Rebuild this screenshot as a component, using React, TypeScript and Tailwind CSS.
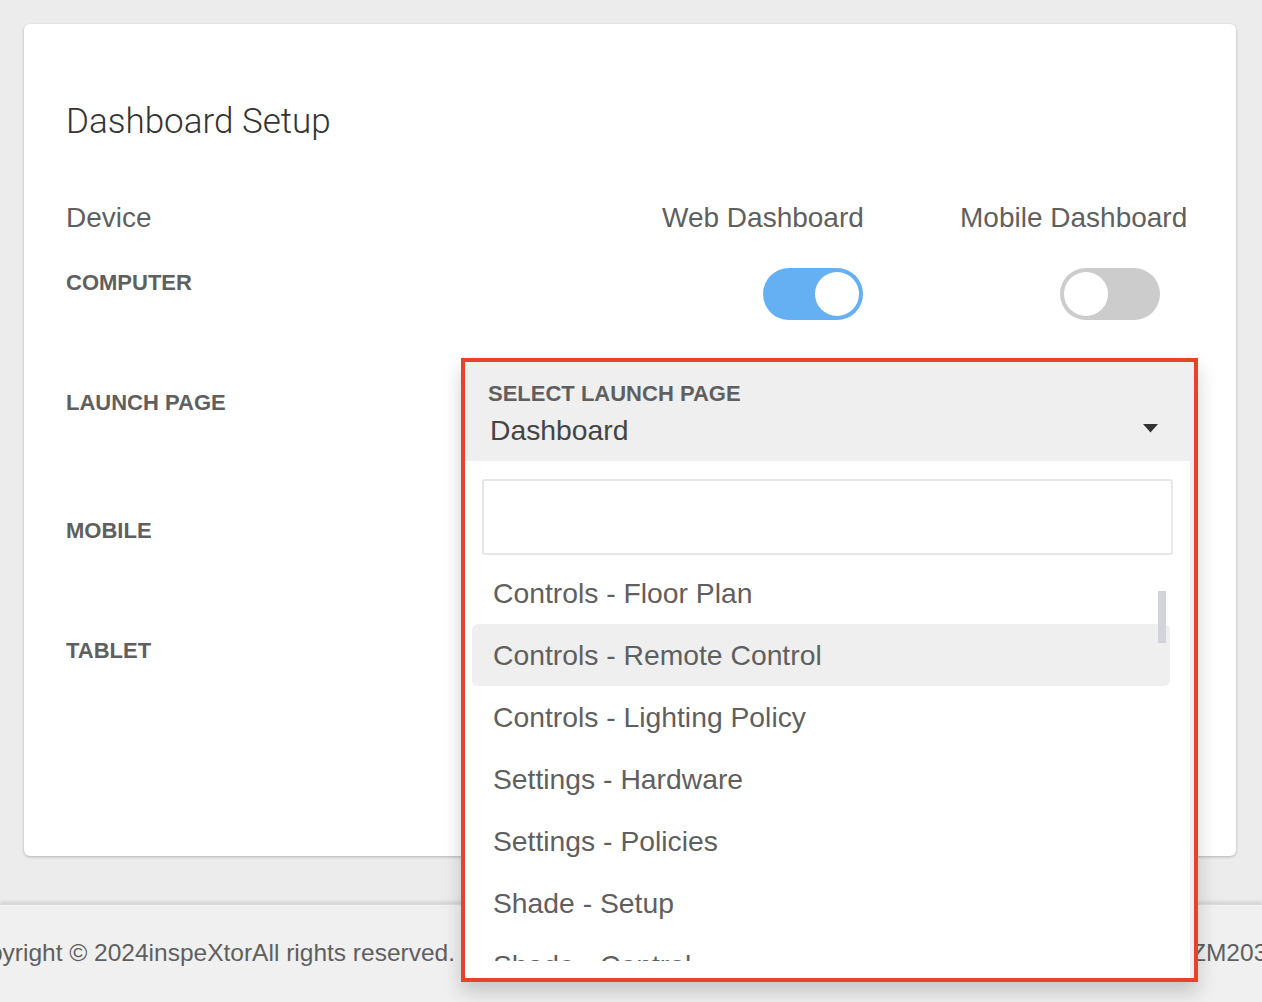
import { useState } from "react";

const options = [
  "Controls - Floor Plan",
  "Controls - Remote Control",
  "Controls - Lighting Policy",
  "Settings - Hardware",
  "Settings - Policies",
  "Shade - Setup",
  "Shade - Control",
  "Shade - Schedule",
];

const Toggle = ({ on }: { on: boolean }) => (
  <div
    className={
      "w-[100px] h-[52px] rounded-full p-[4px] flex " +
      (on ? "bg-[#64b0f2] justify-end" : "bg-[#cccccc] justify-start")
    }
  >
    <div className="w-[44px] h-[44px] rounded-full bg-white" />
  </div>
);

const App = () => {
  const [search, setSearch] = useState("");
  return (
    <div
      className="relative min-h-[1002px] h-[1002px] overflow-hidden bg-[#ececec] flex flex-col text-[#5f5f5f]"
      style={{ fontFamily: '"Liberation Sans", Arial, sans-serif' }}
    >
      <div className="pl-6 pr-[26px] pt-6 shrink-0">
        {/* settings card */}
        <div className="h-[832px] bg-white rounded-md shadow-[0_1px_3px_rgba(0,0,0,0.25)] pl-[42px] pr-[44px] pt-[76px]">
          <h1
            className="h-[44px] leading-[44px] text-[35px] font-light text-[#333]"
            style={{ fontFamily: '"Helvetica Neue", Roboto, "Liberation Sans", sans-serif' }}
          >
            Dashboard Setup
          </h1>

          <div className="mt-[54px] flex h-[40px] items-center text-[28px]">
            <div className="flex-1">Device</div>
            <div className="w-[204px] whitespace-nowrap">Web Dashboard</div>
            <div className="w-[232px] ml-[94px] whitespace-nowrap">Mobile Dashboard</div>
          </div>

          <div className="mt-[30px] flex items-start">
            <div className="flex-1 h-[30px] leading-[30px] text-[22px] font-bold">COMPUTER</div>
            <div className="w-[204px] pl-[101px]">
              <Toggle on />
            </div>
            <div className="w-[232px] ml-[94px] pl-[100px]">
              <Toggle on={false} />
            </div>
          </div>

          <div className="mt-[68px] h-[30px] leading-[30px] text-[22px] font-bold">LAUNCH PAGE</div>
          <div className="mt-[98px] h-[30px] leading-[30px] text-[22px] font-bold">MOBILE</div>
          <div className="mt-[90px] h-[30px] leading-[30px] text-[22px] font-bold">TABLET</div>
        </div>
      </div>

      {/* footer */}
      <div className="mt-auto h-[98px] bg-[#f0f0f0] shadow-[0_-2px_4px_rgba(0,0,0,0.12)] border-t border-[#dcdcdc] flex items-center text-[24.5px] whitespace-nowrap">
        <div className="w-[455px] shrink-0 flex justify-end">
          <span>Copyright © 2024inspeXtorAll rights reserved.</span>
        </div>
        <div className="shrink-0 ml-[736px]">ZM2034 v2.1.0</div>
      </div>

      {/* open launch page dropdown */}
      <div className="absolute left-[461px] top-[358px] w-[737px] h-[624px] border-[4px] border-[#e8432a] bg-[#efefef] shadow-[0_10px_18px_rgba(0,0,0,0.18)] flex flex-col overflow-hidden">
        <div className="h-[99px] shrink-0 bg-[#efefef] pl-[23px] pr-[36px] pt-[20px]">
          <div className="h-[24px] leading-[24px] text-[22px] font-bold">SELECT LAUNCH PAGE</div>
          <div className="mt-[4px] flex items-center justify-between h-[40px]">
            <span className="text-[28.3px] pl-[2px] text-[#444]">Dashboard</span>
            <svg width="15" height="9" viewBox="0 0 15 9" className="mt-[-4px]">
              <path d="M0 0 L15 0 L7.5 8.5 Z" fill="#333" />
            </svg>
          </div>
        </div>
        <div className="flex-1 min-h-0 mr-[4px] bg-white flex flex-col pb-[17px] relative">
          <div className="px-[17px] pt-[18px] shrink-0">
            <input
              value={search}
              onChange={(e) => setSearch(e.target.value)}
              className="w-full h-[76px] border-2 border-[#e6e6e6] rounded-[3px] outline-none px-3 text-[24px]"
            />
          </div>
          <div className="mt-[7px] flex-1 min-h-0 overflow-hidden relative">
            {options.map((o, i) => (
              <div
                key={o}
                className={
                  "ml-[7px] mr-[20px] h-[62px] flex items-center pl-[21px] text-[28.3px] rounded-md " +
                  (i === 1 ? "bg-[#efefef]" : "")
                }
              >
                {o}
              </div>
            ))}
            <div className="absolute right-[24px] top-[29px] w-[8px] h-[52px] bg-[#d2d4d9]" />
          </div>
        </div>
      </div>
    </div>
  );
};

export default App;
